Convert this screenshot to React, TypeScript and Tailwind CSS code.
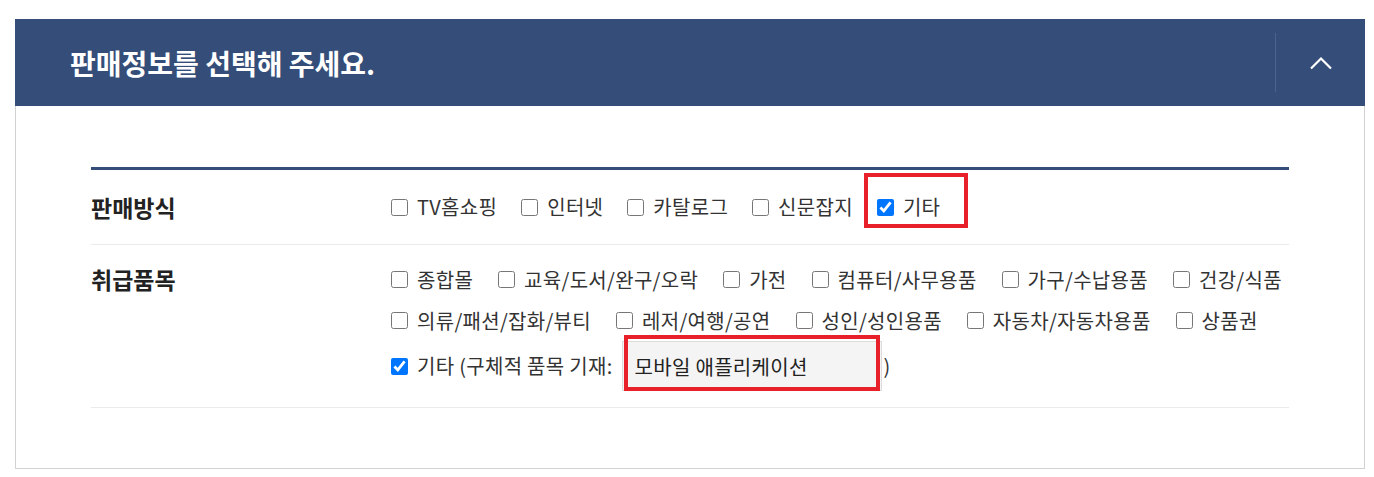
import React from "react";

const font = { fontFamily: '"Noto Sans CJK KR", "Noto Sans", sans-serif' };

function Option({ label, checked = false }: { label: string; checked?: boolean }) {
  return (
    <label className="flex items-center gap-[9px] whitespace-nowrap">
      <input type="checkbox" defaultChecked={checked} className="m-0 h-[17px] w-[17px] shrink-0" />
      <span>{label}</span>
    </label>
  );
}

export default function App() {
  return (
    <div className="bg-white pt-[19px] pl-[15px] w-[1374px] h-[477px] text-[#333]" style={font}>
      <div className="w-[1350px]">
        <div className="flex h-[87px] items-center bg-[#344d79] pl-[55px]">
          <h1 className="flex-1 text-[28px] font-bold text-white">판매정보를 선택해 주세요.</h1>
          <div className="h-[59px] w-px bg-[#4b6391]" />
          <div className="flex w-[89px] items-center justify-center">
            <svg width="24" height="14" viewBox="0 0 24 14" fill="none">
              <path d="M2 12.5L12 2.5L22 12.5" stroke="white" strokeWidth="2.2" />
            </svg>
          </div>
        </div>

        <div className="border border-t-0 border-[#d2d2d2] px-[75px] pt-[61px] pb-[60px]">
          <div className="border-t-[3px] border-[#344d79]">
            <div className="flex h-[75px] items-center border-b border-[#ebebeb]">
              <div className="w-[300px] text-[23px] font-bold text-[#222]">판매방식</div>
              <div className="flex items-center gap-[24px] text-[20px] tracking-[0.3px]">
                <Option label="TV홈쇼핑" />
                <Option label="인터넷" />
                <Option label="카탈로그" />
                <Option label="신문잡지" />
                <div className="relative">
                  <Option label="기타" checked />
                  <div className="pointer-events-none absolute -left-[13px] -top-[19px] h-[55px] w-[104px] border-[4px] border-[#e8202a]" />
                </div>
              </div>
            </div>

            <div className="flex border-b border-[#ebebeb] pt-[14px] pb-[16px]">
              <div className="flex h-[41px] w-[300px] items-center text-[23px] font-bold text-[#222]">
                취급품목
              </div>
              <div className="flex flex-col text-[20px] tracking-[0.3px]">
                <div className="flex h-[41px] items-center gap-[25px]">
                  <Option label="종합몰" />
                  <Option label="교육/도서/완구/오락" />
                  <Option label="가전" />
                  <Option label="컴퓨터/사무용품" />
                  <Option label="가구/수납용품" />
                  <Option label="건강/식품" />
                </div>
                <div className="flex h-[41px] items-center gap-[25px]">
                  <Option label="의류/패션/잡화/뷰티" />
                  <Option label="레저/여행/공연" />
                  <Option label="성인/성인용품" />
                  <Option label="자동차/자동차용품" />
                  <Option label="상품권" />
                </div>
                <div className="flex h-[50px] items-center">
                  <Option label="기타 (구체적 품목 기재:" checked />
                  <div className="relative ml-[9px]">
                    <input
                      type="text"
                      defaultValue="모바일 애플리케이션"
                      className="block h-[50px] w-[260px] border border-[#dcdcdc] bg-[#f4f4f4] px-[12px] text-[20px] tracking-[0.3px] text-[#222] outline-none"
                      style={font}
                    />
                    <div className="pointer-events-none absolute left-[2px] -top-[6px] h-[56px] w-[256px] border-[4px] border-[#e8202a]" />
                  </div>
                  <span className="ml-[2px]">)</span>
                </div>
              </div>
            </div>
          </div>
        </div>
      </div>
    </div>
  );
}
